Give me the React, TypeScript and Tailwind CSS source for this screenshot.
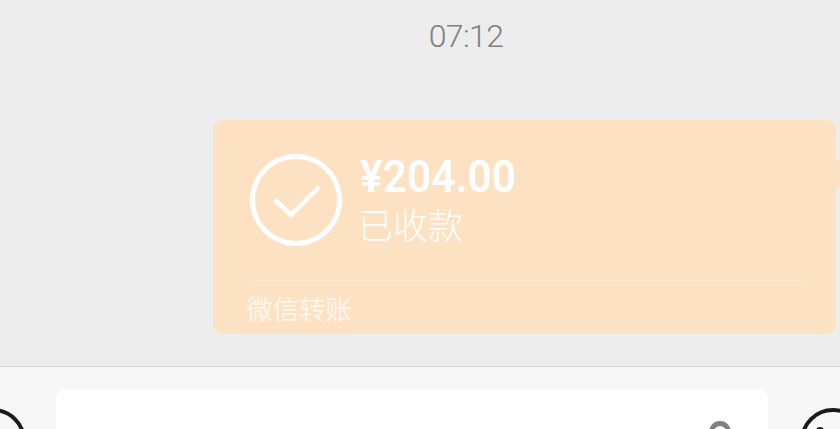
export default function App() {
  return (
    <div className="flex h-[429px] w-[840px] flex-col overflow-hidden bg-[#ededed]">
      <div className="flex h-[367px] shrink-0 flex-col border-b border-[#d2d2d2]">
        <div className="h-[120px] shrink-0 pt-[15px] pl-[92px] text-center font-['Roboto',sans-serif] text-[32px] leading-[42px] font-light tracking-[-0.6px] text-[#7f7f7f]">07:12</div>
        <div className="relative ml-[213px] flex h-[214px] w-[623px] shrink-0 flex-col rounded-[10px] bg-[#fce1c2]">
          <div className="absolute top-[40px] -right-[4px] h-[28px] w-[6px] rounded-r-[2px] bg-[#fce1c2]" />
          <div className="flex h-[160px] items-start pt-[34px] pl-[37px]">
            <svg width="92" height="92" viewBox="0 0 92 92" fill="none" stroke="#fff" strokeWidth="5">
              <circle cx="46" cy="46" r="43.5" />
              <path d="M25 46 L41 61 L69 33" strokeWidth="4.5" />
            </svg>
            <div className="ml-[18px] flex flex-col text-white">
              <div className="origin-left scale-x-[0.965] font-['Roboto',sans-serif] text-[44px] leading-[46px] font-semibold">¥204.00</div>
              <div className="-ml-[2px] font-['Noto_Sans_CJK_SC',sans-serif] text-[35px] leading-[48px] font-light">已收款</div>
            </div>
          </div>
          <div className="mr-[30px] ml-[33px] flex-1 border-t border-[#fde8d2] pt-[8px] font-['Noto_Sans_CJK_SC',sans-serif] text-[26.5px] leading-[38px] font-normal text-[#fff6ec]">微信转账</div>
        </div>
      </div>
      <div className="flex min-h-0 flex-1 items-start gap-[32px] overflow-hidden bg-[#f7f7f7] pt-[22px]">
        <div className="mt-[19px] -ml-[40px] h-[66px] w-[66px] shrink-0 rounded-full border-[4px] border-[#1a1a1a]" />
        <div className="relative -ml-[2px] h-[60px] w-[712px] shrink-0 rounded-[9px] bg-white">
          <div className="absolute top-[32px] left-[653px] h-[22px] w-[22px] rounded-full border-[5px] border-[#808080]" />
        </div>
        <div className="relative mt-[19px] h-[66px] w-[66px] shrink-0 rounded-full border-[4px] border-[#1a1a1a]">
          <div className="absolute top-[15px] left-[12px] h-[8px] w-[8px] rounded-full bg-[#1a1a1a]" />
        </div>
      </div>
    </div>
  );
}
